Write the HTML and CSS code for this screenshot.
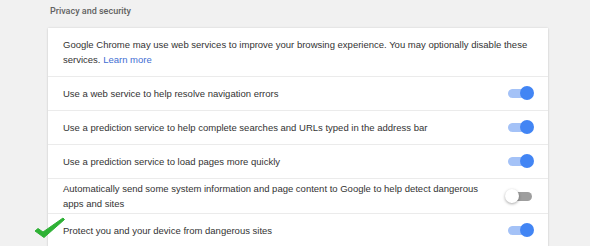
FILE: index.html
```html
<!doctype html>
<html lang="en">
<head>
    <meta charset="UTF-8">
    <title>Privacy and security</title>
    <link rel="stylesheet" href="styles.css">
</head>
<body>
<div class="section">
    <h2 class="section-title">Privacy and security</h2>
    <div class="card">
        <div class="row intro">
            Google Chrome may use web services to improve your browsing experience. You may optionally disable these
            services. <a href="javascript:void(0);" class="link">Learn more</a>
        </div>
        <div class="row">
            <span class="label">Use a web service to help resolve navigation errors</span>
            <span class="toggle on"></span>
        </div>
        <div class="row">
            <span class="label">Use a prediction service to help complete searches and URLs typed in the address bar</span>
            <span class="toggle on"></span>
        </div>
        <div class="row">
            <span class="label">Use a prediction service to load pages more quickly</span>
            <span class="toggle on"></span>
        </div>
        <div class="row">
            <span class="label">Automatically send some system information and page content to Google to help detect dangerous apps and sites</span>
            <span class="toggle"></span>
        </div>
        <div class="row">
            <span class="label">Protect you and your device from dangerous sites</span>
            <span class="toggle on"></span>
            <!--绿色勾-->
            <svg class="check" width="34" height="24" viewBox="0 0 34 24">
                <path d="M2 15 L5 12.5 L10 16 L30 2 L31.5 3.5 L11 21.5 Z" fill="#2eb135" stroke="#2eb135" stroke-width="1" stroke-linejoin="round"/>
            </svg>
        </div>
    </div>
</div>
</body>
</html>
```

FILE: styles.css
```css
* {
    margin: 0;
    padding: 0;
}

body {
    background-color: #f1f1f1;
    font-family: "Liberation Sans", Arial, sans-serif;
    font-size: 9.5px;
    color: #333;
}

.section {
    padding-left: 48px;
    width: 500px;
}

.section-title {
    font-family: Roboto, "Liberation Sans", sans-serif;
    font-size: 9px;
    font-weight: 500;
    color: #616161;
    padding: 6px 0 0 2px;
    height: 22px;
}

.card {
    background-color: #fff;
    box-shadow: 0 0 2px 0 rgba(0, 0, 0, .12), 0 1px 2px rgba(0, 0, 0, .08);
}

.row {
    position: relative;
    display: flex;
    align-items: center;
    min-height: 34px;
    box-sizing: border-box;
    padding: 2px 16px 2px 15px;
    border-top: 1px solid #ebebeb;
    line-height: 15px;
}

.row.intro {
    display: block;
    border-top: none;
    padding: 9px 16px 9px 15px;
    min-height: 48px;
}

.link {
    color: #3f6ed3;
    text-decoration: none;
}

.label {
    flex: 1;
    padding-right: 20px;
}

.toggle {
    position: relative;
    width: 24px;
    height: 9px;
    border-radius: 5px;
    background-color: #9e9e9e;
    flex-shrink: 0;
}

.toggle::after {
    content: "";
    position: absolute;
    top: -3px;
    left: -3px;
    width: 14px;
    height: 14px;
    border-radius: 50%;
    background-color: #fff;
    box-shadow: 0 1px 3px rgba(0, 0, 0, .35);
}

.toggle.on {
    background-color: #a4c2f7;
}

.toggle.on::after {
    left: auto;
    right: -2px;
    background-color: #4285f4;
    box-shadow: none;
}

.check {
    position: absolute;
    left: -15px;
    top: 2px;
}
```
